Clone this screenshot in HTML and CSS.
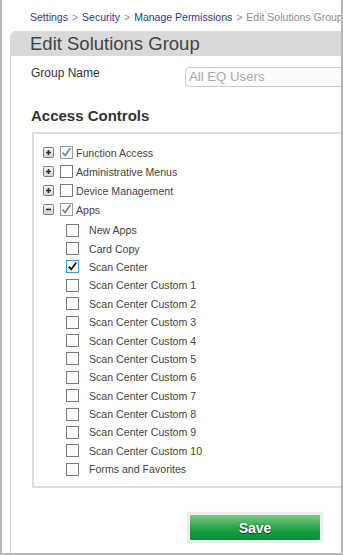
FILE: index.html
```html
<!DOCTYPE html>
<html>
<head>
<meta charset="utf-8">
<link rel="stylesheet" href="styles.css">
</head>
<body>
<div class="frame">
  <nav class="crumbs">
    <a class="crumb">Settings</a><span class="sep">&gt;</span><a class="crumb">Security</a><span class="sep">&gt;</span><a class="crumb">Manage Permissions</a><span class="sep">&gt;</span><span class="current">Edit Solutions Group</span>
  </nav>
  <div class="panel">
    <h1 class="panel-title">Edit Solutions Group</h1>
    <div class="panel-body">
      <div class="field-row">
        <label class="field-label">Group Name</label>
        <div class="field-input">All EQ Users</div>
      </div>
      <h2 class="section-title">Access Controls</h2>
      <div class="tree">
        <div class="node">
          <span class="expander"><svg width="11" height="11" viewBox="0 0 11 11"><defs><linearGradient id="g1" x1="0" y1="0" x2="0" y2="1"><stop offset="0" stop-color="#f6f6f6"/><stop offset="1" stop-color="#d4d4d4"/></linearGradient></defs><rect x="0.5" y="0.5" width="10" height="10" rx="1" fill="url(#g1)" stroke="#7d7d7d"/><path d="M3 5.5h5M5.5 3v5" stroke="#2c2c2c" stroke-width="1.6"/></svg></span>
          <span class="cb checked-soft"><svg width="11" height="11" viewBox="0 0 11 11"><path d="M1.5 5.5l2.6 3 5.4-7.5" fill="none" stroke="#6f7f92" stroke-width="1.6"/></svg></span>
          <span class="label">Function Access</span>
        </div>
        <div class="node">
          <span class="expander"><svg width="11" height="11" viewBox="0 0 11 11"><rect x="0.5" y="0.5" width="10" height="10" rx="1" fill="url(#g1)" stroke="#7d7d7d"/><path d="M3 5.5h5M5.5 3v5" stroke="#2c2c2c" stroke-width="1.6"/></svg></span>
          <span class="cb"></span>
          <span class="label">Administrative Menus</span>
        </div>
        <div class="node">
          <span class="expander"><svg width="11" height="11" viewBox="0 0 11 11"><rect x="0.5" y="0.5" width="10" height="10" rx="1" fill="url(#g1)" stroke="#7d7d7d"/><path d="M3 5.5h5M5.5 3v5" stroke="#2c2c2c" stroke-width="1.6"/></svg></span>
          <span class="cb"></span>
          <span class="label">Device Management</span>
        </div>
        <div class="node">
          <span class="expander"><svg width="11" height="11" viewBox="0 0 11 11"><rect x="0.5" y="0.5" width="10" height="10" rx="1" fill="url(#g1)" stroke="#7d7d7d"/><path d="M3 5.5h5" stroke="#2c2c2c" stroke-width="1.6"/></svg></span>
          <span class="cb checked-soft"><svg width="11" height="11" viewBox="0 0 11 11"><path d="M1.5 5.5l2.6 3 5.4-7.5" fill="none" stroke="#6f7f92" stroke-width="1.6"/></svg></span>
          <span class="label">Apps</span>
        </div>
        <div class="children">
          <div class="leaf"><span class="cb"></span><span class="label">New Apps</span></div>
          <div class="leaf"><span class="cb"></span><span class="label">Card Copy</span></div>
          <div class="leaf"><span class="cb focused"><svg width="11" height="11" viewBox="0 0 11 11"><path d="M1.8 5.6l2.4 2.8 5-7" fill="none" stroke="#111" stroke-width="1.8"/></svg></span><span class="label">Scan Center</span></div>
          <div class="leaf"><span class="cb"></span><span class="label">Scan Center Custom 1</span></div>
          <div class="leaf"><span class="cb"></span><span class="label">Scan Center Custom 2</span></div>
          <div class="leaf"><span class="cb"></span><span class="label">Scan Center Custom 3</span></div>
          <div class="leaf"><span class="cb"></span><span class="label">Scan Center Custom 4</span></div>
          <div class="leaf"><span class="cb"></span><span class="label">Scan Center Custom 5</span></div>
          <div class="leaf"><span class="cb"></span><span class="label">Scan Center Custom 6</span></div>
          <div class="leaf"><span class="cb"></span><span class="label">Scan Center Custom 7</span></div>
          <div class="leaf"><span class="cb"></span><span class="label">Scan Center Custom 8</span></div>
          <div class="leaf"><span class="cb"></span><span class="label">Scan Center Custom 9</span></div>
          <div class="leaf"><span class="cb"></span><span class="label">Scan Center Custom 10</span></div>
          <div class="leaf"><span class="cb"></span><span class="label">Forms and Favorites</span></div>
        </div>
      </div>
      <div class="actions">
        <div class="btn-wrap"><button class="btn-save">Save</button></div>
      </div>
    </div>
  </div>
</div>
</body>
</html>
```

FILE: styles.css
```css
html, body {
  margin: 0;
  padding: 0;
  background: #ffffff;
}

.frame {
  box-sizing: border-box;
  width: 343px;
  height: 555px;
  border-left: 2px solid #b8b8b8;
  border-right: 2px solid #b8b8b8;
  border-bottom: 2px solid #b8b8b8;
  overflow: hidden;
  font-family: "Liberation Sans", Arial, sans-serif;
  background: #ffffff;
}

.crumbs {
  padding: 10px 0 0 28px;
  height: 14px;
  line-height: 14px;
  font-size: 10.5px;
  white-space: nowrap;
}

.crumb {
  color: #35387f;
  text-decoration: none;
}

.sep {
  color: #8c8c8c;
  margin: 0 4px;
}

.current {
  color: #8c8c8c;
}

.panel {
  margin: 7px 0 0 8px;
  width: 420px;
}

.panel-title {
  margin: 0;
  height: 25px;
  line-height: 25px;
  padding-left: 20px;
  background: #d9d9d9;
  border-top-left-radius: 6px;
  font-size: 18.5px;
  font-weight: normal;
  color: #444444;
}

.panel-body {
  border-left: 1px solid #cfcfcf;
  padding: 10px 0 0 20px;
  height: 600px;
}

.field-row {
  display: flex;
  align-items: flex-start;
}

.field-label {
  width: 154px;
  line-height: 14px;
  font-size: 12px;
  color: #333333;
}

.field-input {
  box-sizing: border-box;
  margin-top: 1px;
  height: 20px;
  width: 200px;
  border: 1px solid #cccccc;
  border-radius: 4px 0 0 4px;
  padding-left: 3px;
  line-height: 18px;
  font-size: 13.2px;
  color: #a9a9a9;
  background: #fcfcfc;
}

.section-title {
  margin: 20px 0 0 0;
  line-height: 18px;
  font-size: 15px;
  font-weight: bold;
  color: #333333;
}

.tree {
  margin: 7px 0 0 1px;
  border: 2px solid #dddddd;
  padding: 9px 0 8px 9px;
  font-size: 10.6px;
  color: #444444;
}

.node {
  display: flex;
  align-items: center;
  height: 19px;
}

.expander {
  display: flex;
  width: 11px;
  height: 11px;
  margin-right: 6px;
}

.cb {
  box-sizing: border-box;
  display: flex;
  align-items: center;
  justify-content: center;
  width: 13px;
  height: 13px;
  border: 1px solid #7a7a7a;
  background: #ffffff;
}

.cb.checked-soft {
  border-color: #9a9a9a;
}

.cb.focused {
  border-color: #3d97db;
}

.node .label {
  margin-left: 3px;
}

.children {
  margin-top: 2px;
  padding-left: 23px;
}

.leaf {
  display: flex;
  align-items: center;
  height: 18.4px;
}

.leaf .label {
  margin-left: 10px;
}

.actions {
  margin-top: 24px;
  padding-left: 156px;
}

.btn-wrap {
  display: inline-block;
  padding: 3px;
  background: #eeeeee;
  border-radius: 4px;
  box-shadow: 0 0 1px #d4d4d4;
}

.btn-save {
  display: block;
  width: 130px;
  height: 25px;
  border: none;
  border-radius: 1px;
  padding: 0;
  background: linear-gradient(to bottom, #7ccb83 0%, #33a852 45%, #129a3e 70%, #0b8f38 100%);
  color: #ffffff;
  font-family: "Liberation Sans", Arial, sans-serif;
  font-size: 14px;
  font-weight: bold;
  text-shadow: 0 1px 1px #1d3d22, 0 0 1px #1d3d22;
}
```
